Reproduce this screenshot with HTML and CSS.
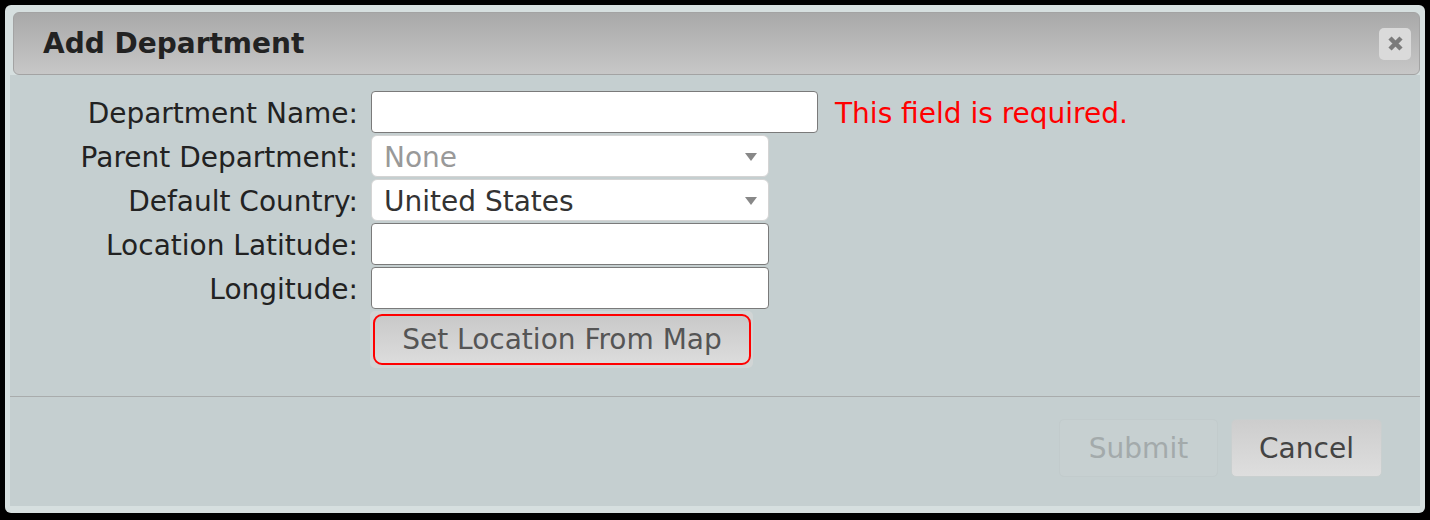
FILE: index.html
```html
<!DOCTYPE html>
<html>
<head>
    <title>Add Department</title>
    <link rel="stylesheet" href="styles.css">
</head>
<body>
    <div class="dialog">
        <div class="titlebar">
            <span class="title">Add Department</span>
            <button class="close" title="Close">
                <svg width="15" height="15" viewBox="0 0 15 15"><path d="M2 2 L13 13 M13 2 L2 13" stroke="#7b7b7b" stroke-width="4.5"/></svg>
            </button>
        </div>
        <div class="content">
            <form class="dept-form">
                <label>Department Name:</label>
                <div class="field">
                    <input type="text" class="wide">
                    <span class="error">This field is required.</span>
                </div>

                <label>Parent Department:</label>
                <div class="field">
                    <div class="select-wrap">
                        <select class="placeholder"><option>None</option></select>
                    </div>
                </div>

                <label>Default Country:</label>
                <div class="field">
                    <div class="select-wrap">
                        <select><option>United States</option></select>
                    </div>
                </div>

                <label>Location Latitude:</label>
                <div class="field"><input type="text"></div>

                <label>Longitude:</label>
                <div class="field"><input type="text"></div>

                <span></span>
                <div class="map-wrap">
                    <button type="button" class="map-btn">Set Location From Map</button>
                </div>
            </form>
            <div class="buttonpane">
                <button type="button" class="btn disabled">Submit</button>
                <button type="button" class="btn cancel">Cancel</button>
            </div>
        </div>
    </div>
</body>
</html>
```

FILE: styles.css
```css
body {
    margin: 0;
    padding: 5px 5px 7px 5px;
    background-color: #000;
    font-family: "DejaVu Sans", Verdana, sans-serif;
    height: 508px;
}
.dialog {
    height: 508px;
    box-sizing: border-box;
    background-color: #d6dfdf;
    border-radius: 6px;
    padding: 7px 5px 7px 5px;
    display: flex;
    flex-direction: column;
}
.titlebar {
    margin-left: 3px;
    height: 63px;
    box-sizing: border-box;
    border: 1px solid #a3a3a3;
    border-radius: 6px;
    background: linear-gradient(#a9a9a9, #c7c7c7);
    display: flex;
    align-items: center;
    justify-content: space-between;
    padding: 0 8px 0 29px;
}
.title {
    font-size: 28px;
    font-weight: bold;
    color: #222;
}
.close {
    width: 32px;
    height: 32px;
    border: none;
    border-radius: 5px;
    background-color: #dadada;
    display: flex;
    align-items: center;
    justify-content: center;
    padding: 0;
}
.content {
    flex: 1;
    background-color: #c5cfd0;
    padding-top: 16px;
}
.dept-form {
    display: grid;
    grid-template-columns: 348px auto;
    grid-template-rows: repeat(5, 42px) 57px;
    column-gap: 13px;
    row-gap: 2px;
    font-size: 28px;
}
.dept-form label {
    text-align: right;
    align-self: center;
    color: #222;
    padding-top: 3px;
}
.field {
    display: flex;
    align-items: center;
}
input[type="text"],
select {
    width: 398px;
    height: 42px;
    box-sizing: border-box;
    border: 1px solid #7a7a7a;
    border-radius: 4px;
    background-color: #fff;
    font-family: inherit;
    font-size: 28px;
    color: #333;
    margin: 0;
}
input.wide {
    width: 447px;
}
select {
    -webkit-appearance: none;
    appearance: none;
    border-color: #d4d4d4;
    padding: 2px 12px 0 12px;
    border-radius: 6px;
}
select.placeholder {
    color: #999;
}
.select-wrap {
    position: relative;
}
.select-wrap::after {
    content: "";
    position: absolute;
    right: 12px;
    top: 18px;
    border-left: 6px solid transparent;
    border-right: 6px solid transparent;
    border-top: 8px solid #888;
}
.error {
    color: #ff0000;
    margin-left: 17px;
    padding-top: 3px;
}
.map-wrap {
    height: 57px;
    width: 383px;
    box-sizing: border-box;
    padding: 3px 2px 3px 3px;
    background-color: #d1d5d5;
    border-radius: 5px;
    margin-left: -1px;
}
.map-btn {
    width: 100%;
    height: 100%;
    border: 2px solid #ff0000;
    border-radius: 9px;
    background: linear-gradient(#c9c9c9, #dcdcdc);
    font-family: inherit;
    font-size: 28px;
    color: #555;
    padding: 0;
}
.buttonpane {
    margin-top: 28px;
    border-top: 1px solid #a9acac;
    padding: 22px 38px 0 0;
    display: flex;
    justify-content: flex-end;
    gap: 13px;
}
.btn {
    height: 58px;
    padding: 0;
    border: 1px solid #c9cfcf;
    border-radius: 5px;
    background: linear-gradient(#cdcdcd, #dedede);
    font-family: inherit;
    font-size: 28px;
    color: #444;
}
.btn.cancel {
    width: 151px;
}
.btn.disabled {
    background: #c7d0d1;
    border-color: #c2cbcc;
    color: #a3aaab;
    width: 159px;
}
```
